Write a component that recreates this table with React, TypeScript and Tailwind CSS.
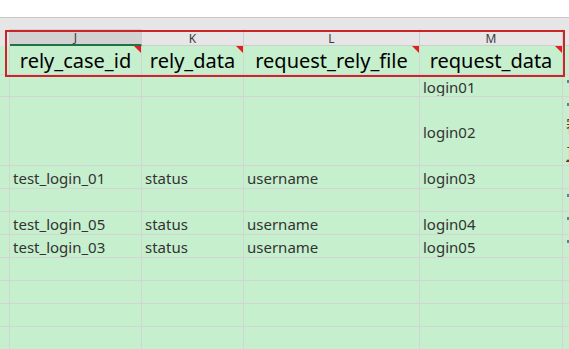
const cols = [
  { key: 'J', w: 'w-[132px]', head: 'rely_case_id' },
  { key: 'K', w: 'w-[102px]', head: 'rely_data' },
  { key: 'L', w: 'w-[176px]', head: 'request_rely_file' },
  { key: 'M', w: 'w-[143px]', head: 'request_data' },
];

type Row = { h: string; cells: string[]; mark?: boolean; note?: boolean };

const rows: Row[] = [
  { h: 'h-[22px]', cells: ['', '', '', 'login01'], mark: true },
  { h: 'h-[69px]', cells: ['', '', '', 'login02'], note: true },
  { h: 'h-[23px]', cells: ['test_login_01', 'status', 'username', 'login03'] },
  { h: 'h-[23px]', cells: ['', '', '', ''], mark: true },
  { h: 'h-[23px]', cells: ['test_login_05', 'status', 'username', 'login04'], mark: true },
  { h: 'h-[23px]', cells: ['test_login_03', 'status', 'username', 'login05'], mark: true },
  { h: 'h-[23px]', cells: ['', '', '', ''] },
  { h: 'h-[23px]', cells: ['', '', '', ''] },
  { h: 'h-[23px]', cells: ['', '', '', ''] },
  { h: 'h-[23px]', cells: ['', '', '', ''] },
];

function Corner() {
  // red comment indicator
  return (
    <span className="absolute right-0 top-0 h-0 w-0 border-l-[7px] border-t-[7px] border-l-transparent border-t-[#e0201c]" />
  );
}

export default function App() {
  return (
    <div className="relative h-[349px] w-[569px] overflow-hidden bg-white font-['Noto_Sans',sans-serif]">
      <div className="h-[18px] border-b border-[#c9c9c9] bg-white" />
      <div className="h-[11px] bg-[#e6e6e6]" />

      {/* column letters */}
      <div className="flex h-[17px] bg-[#e6e6e6] text-[12px] leading-none text-[#3c3c3c]">
        <div className="w-[10px] border-r border-[#d0d0d0]" />
        {cols.map((c, i) => (
          <div
            key={c.key}
            className={`${c.w} flex items-center justify-center border-r border-[#cfcfcf] pt-[3px] ${
              i === 0 ? 'border-b-2 border-b-[#217346] bg-[#d2d2d2]' : 'border-b border-b-[#cfcfcf]'
            }`}
          >
            {c.key}
          </div>
        ))}
        <div className="flex-1 border-b border-[#cfcfcf]" />
      </div>

      {/* header row */}
      <div className="flex h-[29px] border-b border-[#d4d4d4] bg-[#c6efce] text-[20px] leading-none text-black">
        <div className="w-[10px] border-r border-[#d4d4d4]" />
        {cols.map((c) => (
          <div key={c.key} className={`${c.w} relative flex items-center justify-center border-r border-[#d4d4d4] pt-[1px]`}>
            {c.head}
            <Corner />
          </div>
        ))}
        <div className="flex-1" />
      </div>

      {rows.map((r, ri) => (
        <div key={ri} className={`flex ${r.h} border-b border-[#d4d4d4] bg-[#c6efce] text-[15px] leading-none text-[#333]`}>
          <div className="w-[10px] border-r border-[#d4d4d4]" />
          {cols.map((c, ci) => (
            <div key={c.key} className={`${c.w} flex items-center overflow-hidden whitespace-nowrap border-r border-[#d4d4d4] pl-[3px] pt-[3px]`}>
              {r.cells[ci]}
            </div>
          ))}
          <div className="relative flex-1 overflow-hidden">
            {r.mark && <span className="absolute left-[4px] top-[5px] h-[3px] w-[2px] bg-[#4f8a8b]" />}
            {r.note && (
              <>
                <span className="absolute left-[4px] top-[6px] h-[3px] w-[2px] bg-[#4f8a8b]" />
                <span className="absolute left-[3px] top-[19px] whitespace-nowrap font-['Noto_Sans_CJK_SC',sans-serif] text-[17px] leading-none text-[#5a3a1a]">
                  審核
                </span>
                <span className="absolute left-[3px] top-[47px] whitespace-nowrap font-['Noto_Sans_CJK_SC',sans-serif] text-[17px] leading-none text-[#5a3a1a] underline">
                  直接
                </span>
              </>
            )}
          </div>
        </div>
      ))}

      {/* red annotation box */}
      <div className="pointer-events-none absolute left-[5px] top-[30px] h-[47px] w-[560px] border-2 border-[#c8262b]" />
    </div>
  );
}
